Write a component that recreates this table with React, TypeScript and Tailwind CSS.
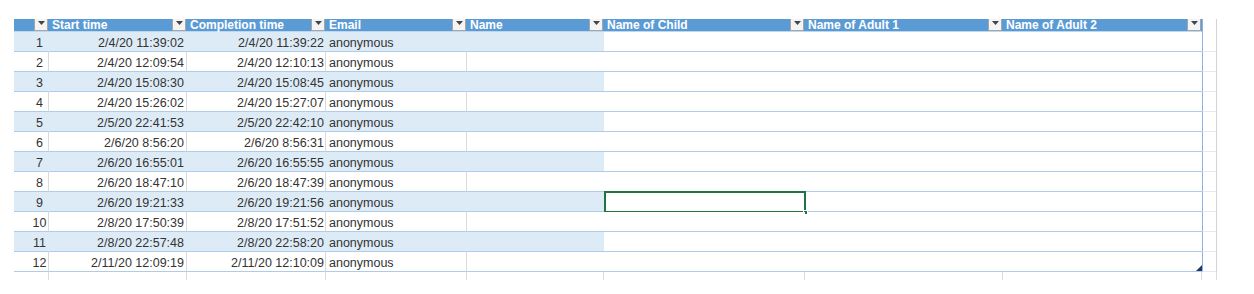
import React from "react";

const COLS = [
  { w: "w-[35px]", label: "" },
  { w: "w-[138px]", label: "Start time" },
  { w: "w-[139px]", label: "Completion time" },
  { w: "w-[141px]", label: "Email" },
  { w: "w-[137px]", label: "Name" },
  { w: "w-[201px]", label: "Name of Child" },
  { w: "w-[198px]", label: "Name of Adult 1" },
  { w: "w-[199px]", label: "Name of Adult 2" },
];

const ROWS = [
  ["2/4/20 11:39:02", "2/4/20 11:39:22"],
  ["2/4/20 12:09:54", "2/4/20 12:10:13"],
  ["2/4/20 15:08:30", "2/4/20 15:08:45"],
  ["2/4/20 15:26:02", "2/4/20 15:27:07"],
  ["2/5/20 22:41:53", "2/5/20 22:42:10"],
  ["2/6/20 8:56:20", "2/6/20 8:56:31"],
  ["2/6/20 16:55:01", "2/6/20 16:55:55"],
  ["2/6/20 18:47:10", "2/6/20 18:47:39"],
  ["2/6/20 19:21:33", "2/6/20 19:21:56"],
  ["2/8/20 17:50:39", "2/8/20 17:51:52"],
  ["2/8/20 22:57:48", "2/8/20 22:58:20"],
  ["2/11/20 12:09:19", "2/11/20 12:10:09"],
];

function FilterButton() {
  return (
    <div className="w-[14px] h-[12px] shrink-0 bg-[#f4f4f4] border-x border-b border-[#a6a6a6] flex justify-center pt-[2px]">
      <svg width="7" height="4" viewBox="0 0 7 4">
        <polygon points="0,0 7,0 3.5,4" fill="#444" />
      </svg>
    </div>
  );
}

function HeaderRow() {
  return (
    <div className="flex h-[13px]">
      {COLS.map((c, i) => (
        <div
          key={i}
          className={`${c.w} h-[13px] bg-[#5b9bd5] border-b border-[#bdd7ee] flex justify-between pr-[1px]`}
        >
          <span className="pl-[3px] text-[12px] leading-[12px] font-bold text-white whitespace-nowrap">
            {c.label}
          </span>
          <FilterButton />
        </div>
      ))}
      <div className="w-[15px] h-[13px] border-l border-[#8db3e2] border-r border-r-[#d4d4d4]" />
    </div>
  );
}

function DataRow({ index, start, end }: { index: number; start: string; end: string }) {
  const banded = index % 2 === 1;
  const fill = banded ? "bg-[#ddebf7]" : "bg-white";
  const vline = banded ? "border-r-[#ddebf7]" : "border-r-[#d9d9d9]";
  const isLast = index === 12;
  const text = "text-[12.5px] leading-[13px] text-[#333] whitespace-nowrap";

  return (
    <div className="flex h-[20px]">
      <div className={`w-[35px] ${fill} border-b border-b-[#b0cbe8] border-r ${vline} flex items-end justify-center pl-[17px] pb-[1px] ${text}`}>
        {index}
      </div>
      <div className={`w-[138px] ${fill} border-b border-b-[#b0cbe8] border-r ${vline} flex items-end justify-end pr-[2px] pb-[1px] ${text}`}>
        {start}
      </div>
      <div className={`w-[139px] ${fill} border-b border-b-[#b0cbe8] border-r ${vline} flex items-end justify-end pr-[1px] pb-[1px] ${text}`}>
        {end}
      </div>
      <div className={`w-[141px] ${fill} border-b border-b-[#b0cbe8] border-r ${vline} flex items-end pl-[3px] pb-[1px] ${text}`}>
        anonymous
      </div>
      <div className={`w-[137px] ${fill} border-b border-b-[#b0cbe8]`} />
      <div className="relative w-[201px] bg-white border-b border-b-[#b0cbe8]">
        {index === 9 && (
          <div className="absolute -top-[1px] left-0 w-[202px] h-[22px] border-2 border-[#217346]">
            <div className="absolute left-[197px] top-[17px] w-[5px] h-[5px] bg-[#217346] border border-white" />
          </div>
        )}
      </div>
      <div className="w-[198px] bg-white border-b border-b-[#b0cbe8]" />
      <div className="relative w-[199px] bg-white border-b border-b-[#b0cbe8]">
        {isLast && (
          <svg className="absolute right-0 bottom-0" width="6" height="6" viewBox="0 0 6 6">
            <polygon points="6,0 6,6 0,6" fill="#1f3864" />
            <rect x="3" y="3" width="3" height="3" fill="#1f3864" />
          </svg>
        )}
      </div>
      <div className="w-[15px] border-l border-[#8db3e2] border-r border-r-[#d4d4d4] border-b border-b-[#e3e9f1]" />
    </div>
  );
}

function TailRow() {
  return (
    <div className="flex h-[8px]">
      {COLS.map((c, i) => (
        <div key={i} className={`${c.w} border-r border-[#dcdcdc]`} />
      ))}
      <div className="w-[15px] border-r border-[#dcdcdc]" />
    </div>
  );
}

export default function App() {
  return (
    <div
      className="w-[1254px] h-[294px] bg-white pl-[14px] pt-[19px]"
      style={{ fontFamily: '"Liberation Sans", Arial, sans-serif' }}
    >
      <HeaderRow />
      {ROWS.map((r, i) => (
        <DataRow key={i} index={i + 1} start={r[0]} end={r[1]} />
      ))}
      <TailRow />
    </div>
  );
}
